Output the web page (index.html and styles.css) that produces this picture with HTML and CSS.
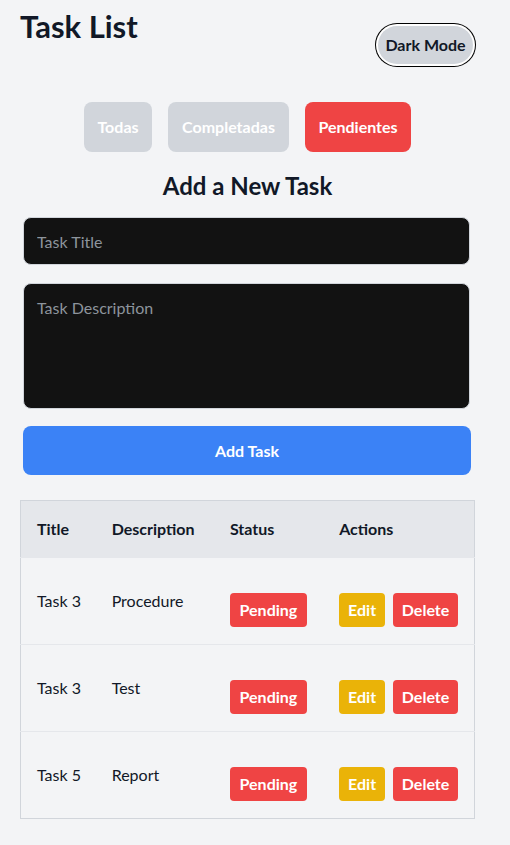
FILE: index.html
```html
<!DOCTYPE html>
<html lang="en">
<head>
<meta charset="utf-8">
<title>Task List</title>
<link rel="stylesheet" href="styles.css">
</head>
<body>
<div class="app">
  <header class="topbar">
    <h1 class="title">Task List</h1>
    <button class="mode-btn">Dark Mode</button>
  </header>

  <div class="filters">
    <button class="filter f-all">Todas</button>
    <button class="filter f-done">Completadas</button>
    <button class="filter f-pend active">Pendientes</button>
  </div>

  <h2 class="form-title">Add a New Task</h2>
  <form class="task-form">
    <input class="field" type="text" placeholder="Task Title">
    <textarea class="field area" placeholder="Task Description"></textarea>
    <button type="button" class="add-btn">Add Task</button>
  </form>

  <table class="tasks">
    <thead>
      <tr>
        <th class="c1">Title</th>
        <th class="c2">Description</th>
        <th class="c3">Status</th>
        <th class="c4">Actions</th>
      </tr>
    </thead>
    <tbody>
      <tr>
        <td class="txt">Task 3</td>
        <td class="txt">Procedure</td>
        <td class="btns"><span class="badge red">Pending</span></td>
        <td class="btns"><div class="actions"><button class="sm yellow">Edit</button><button class="sm red">Delete</button></div></td>
      </tr>
      <tr>
        <td class="txt">Task 3</td>
        <td class="txt">Test</td>
        <td class="btns"><span class="badge red">Pending</span></td>
        <td class="btns"><div class="actions"><button class="sm yellow">Edit</button><button class="sm red">Delete</button></div></td>
      </tr>
      <tr>
        <td class="txt">Task 5</td>
        <td class="txt">Report</td>
        <td class="btns"><span class="badge red">Pending</span></td>
        <td class="btns"><div class="actions"><button class="sm yellow">Edit</button><button class="sm red">Delete</button></div></td>
      </tr>
    </tbody>
  </table>
</div>
</body>
</html>
```
FILE: styles.css
```css
* { box-sizing: border-box; }
html, body { margin: 0; padding: 0; background: #f3f4f6; }
body {
  font-family: "Lato", "Noto Sans", sans-serif;
  color: #111827;
  font-size: 16px;
  line-height: 24px;
}
.app {
  width: 455px;
  margin-left: 20px;
  padding-bottom: 27px;
}
.topbar {
  display: flex;
  justify-content: space-between;
  align-items: flex-start;
}
.title {
  margin: 8px 0 0;
  font-size: 31px;
  line-height: 36px;
  font-weight: 700;
  white-space: nowrap;
}
.mode-btn {
  margin-top: 26px;
  margin-right: 2px;
  height: 38px;
  width: 95px;
  padding: 0;
  border: none;
  border-radius: 999px;
  background: #d1d5db;
  color: #111827;
  font: 700 16px/24px "Lato", sans-serif;
  box-shadow: 0 0 0 2px #ffffff, 0 0 0 3px #000000;
}
.filters {
  display: flex;
  justify-content: center;
  gap: 16px;
  margin-top: 38px;
}
.filter {
  height: 50px;
  padding: 0;
  border: none;
  border-radius: 8px;
  background: #d1d5db;
  color: #ffffff;
  text-align: center;
  font: 700 16px/24px "Lato", sans-serif;
}
.f-all { width: 68px; }
.f-done { width: 121px; }
.f-pend { width: 106px; }
.filter.active { background: #ef4444; }
.form-title {
  margin: 18px 0 0;
  text-align: center;
  font-size: 24px;
  line-height: 32px;
  font-weight: 700;
}
.task-form {
  margin: 15px 0 0 3px;
  width: 448px;
  display: flex;
  flex-direction: column;
}
.field {
  display: block;
  width: 447px;
  height: 48px;
  padding: 12px 13px;
  border: 1px solid #d1d5db;
  border-radius: 8px;
  background: #121212;
  color: #ffffff;
  font: 400 16px/24px "Lato", sans-serif;
  resize: none;
}
.field::placeholder { color: #8d949c; }
.area { height: 126px; margin-top: 18px; }
.add-btn {
  margin-top: 17px;
  height: 49px;
  width: 448px;
  border: none;
  border-radius: 8px;
  background: #3b82f6;
  color: #ffffff;
  font: 700 16px/24px "Lato", sans-serif;
}
.tasks {
  margin-top: 25px;
  width: 455px;
  border-collapse: collapse;
  border: 1px solid #d1d5db;
  table-layout: fixed;
}
.tasks th {
  background: #e5e7eb;
  text-align: left;
  font-weight: 700;
  padding: 16px;
  height: 56px;
  white-space: nowrap;
}
.c1 { width: 75px; }
.c2 { width: 118px; }
.c3 { width: 109px; }
.c4 { width: 151px; }
.tasks td {
  vertical-align: top;
  border-top: 1px solid #e5e7eb;
  padding: 0 16px;
  white-space: nowrap;
}
.tasks td.txt { padding-top: 31px; }
.tasks td.btns { padding-top: 35px; padding-bottom: 17px; }
.badge, .sm {
  display: inline-block;
  height: 34px;
  padding: 5px 0;
  border: none;
  border-radius: 4px;
  color: #ffffff;
  text-align: center;
  font: 700 16px/24px "Lato", sans-serif;
}
.badge { width: 77px; }
.actions { display: flex; gap: 8px; }
.sm.yellow { width: 46px; }
.sm.red { width: 65px; }
.red { background: #ef4444; }
.yellow { background: #eab308; }
```
